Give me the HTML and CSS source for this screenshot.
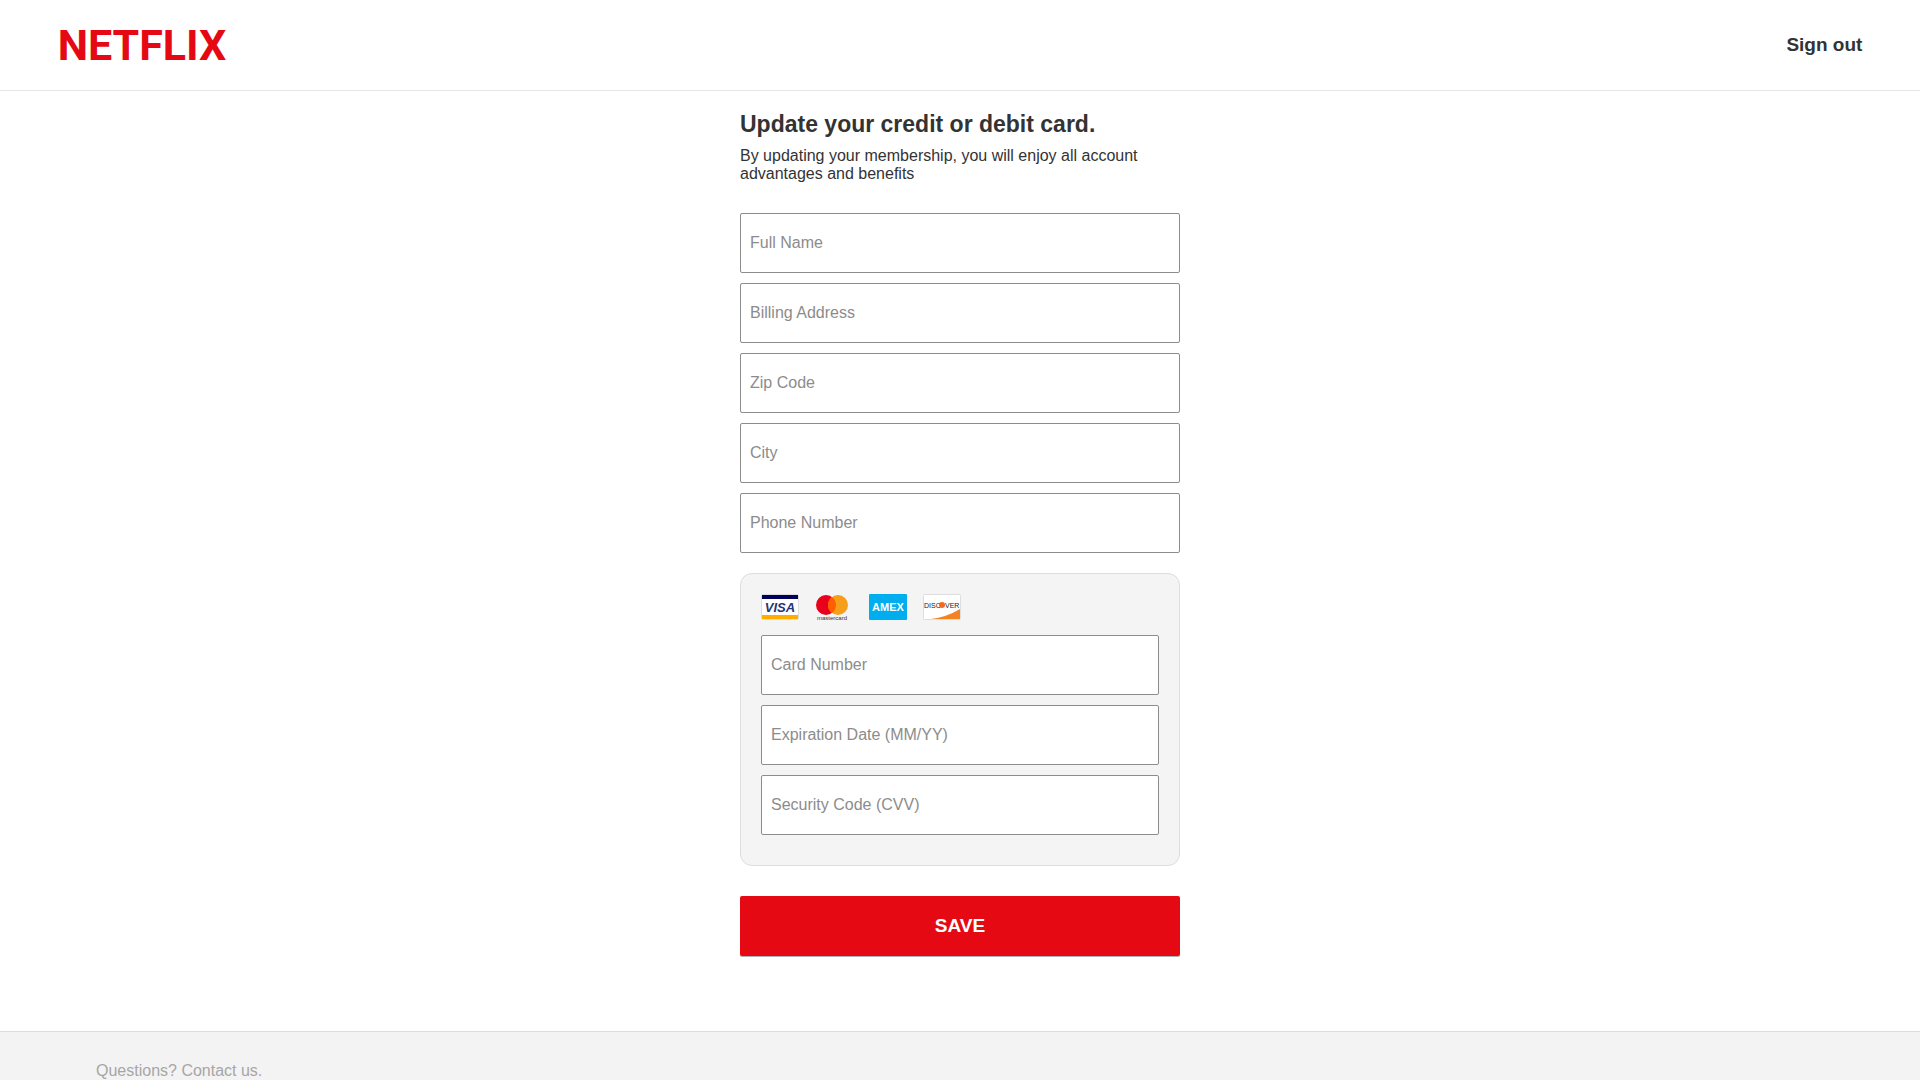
FILE: index.html
```html
<!DOCTYPE html>
<html lang="en">
<head>
	<meta charset="utf-8">
	<meta name="viewport" content="width=device-width, initial-scale=1">
	<title>Card form mockup</title>
	<link rel="stylesheet" href="styles.css">
</head>
<body>
	<header class="header">
		<svg class="logo" viewBox="0 0 168 46" role="img" aria-label="Netflix">
			<text class="logo-text" x="84" y="38">NETFLIX</text>
		</svg>
		<a class="sign-out" href="#">Sign out</a>
	</header>

	<!-- static mockup: the fields are not in a form and are never submitted -->
	<main class="container">
		<h1 class="title">Update your credit or debit card.</h1>
		<p class="intro">By updating your membership, you will enjoy all account advantages and benefits</p>

		<div class="fields">
			<input type="text" aria-label="Full Name" placeholder="Full Name" autocomplete="off">
			<input type="text" aria-label="Billing Address" placeholder="Billing Address" autocomplete="off">
			<input type="text" aria-label="Zip Code" placeholder="Zip Code" autocomplete="off">
			<input type="text" aria-label="City" placeholder="City" autocomplete="off">
			<input type="text" aria-label="Phone Number" placeholder="Phone Number" autocomplete="off">
		</div>

		<div class="card-box">
			<div class="card-icons">
				<svg viewBox="0 0 38 26" role="img" aria-label="Visa">
					<rect x="0.5" y="0.5" width="37" height="25" rx="1" fill="#fff" stroke="#ddd"/>
					<path d="M1 1H37V5H1Z" fill="#00005c"/>
					<path d="M1 21H37V25H1Z" fill="#ffad00"/>
					<text class="visa" x="19" y="18">VISA</text>
				</svg>
				<svg viewBox="0 0 38 26" role="img" aria-label="Mastercard">
					<circle cx="11" cy="11" r="10" fill="#eb001b"/>
					<circle cx="23" cy="11" r="10" fill="#f79e1b"/>
					<path d="M17 3A10 10 0 0 1 17 19A10 10 0 0 1 17 3Z" fill="#ff5f00"/>
					<text class="mastercard" x="17" y="26">mastercard</text>
				</svg>
				<svg viewBox="0 0 38 26" role="img" aria-label="American Express">
					<rect width="38" height="26" rx="1" fill="#00aeef"/>
					<text class="amex" x="19" y="17">AMEX</text>
				</svg>
				<svg viewBox="0 0 38 26" role="img" aria-label="Discover">
					<rect x="0.5" y="0.5" width="37" height="25" rx="1" fill="#fff" stroke="#ddd"/>
					<path d="M37 15V25H8Q24 23 37 15Z" fill="#f58220"/>
					<text class="discover" x="1" y="14">DISC</text>
					<circle cx="19" cy="11" r="3" fill="#f26b21"/>
					<text class="discover" x="22" y="14">VER</text>
				</svg>
			</div>
			<div class="fields">
				<input type="text" aria-label="Card Number" placeholder="Card Number" autocomplete="off">
				<input type="text" aria-label="Expiration Date (MM/YY)" placeholder="Expiration Date (MM/YY)" autocomplete="off">
				<input type="text" aria-label="Security Code (CVV)" placeholder="Security Code (CVV)" autocomplete="off">
			</div>
		</div>

		<button class="save" type="button">SAVE</button>
	</main>

	<footer class="footer">
		<a href="#">Questions? Contact us.</a>
	</footer>
</body>
</html>
```

FILE: styles.css
```css
* {
	box-sizing: border-box;
}

body {
	margin: 0;
	background-color: #fff;
	color: #333;
	font-family: "Liberation Sans", Arial, sans-serif;
	font-size: 16px;
}

.header {
	display: flex;
	align-items: center;
	justify-content: space-between;
	height: 91px;
	padding: 0 3%;
	border-bottom: 1px solid #e6e6e6;
}

.logo {
	width: 168px;
	height: 46px;
}

.logo-text {
	fill: #e50914;
	font-family: Roboto, "Liberation Sans", sans-serif;
	font-size: 43px;
	font-weight: bold;
	text-anchor: middle;
}

.sign-out {
	color: #333;
	font-size: 19px;
	font-weight: bold;
	text-decoration: none;
}

.sign-out:hover {
	text-decoration: underline;
}

.container {
	max-width: 440px;
	margin: 0 auto;
	padding: 20px 0 75px;
}

.title {
	margin: 0 0 9px;
	font-size: 23px;
	line-height: 27px;
}

.intro {
	margin: 0 0 30px;
	line-height: 18px;
}

.fields {
	display: grid;
	gap: 10px;
}

.fields input {
	width: 100%;
	height: 60px;
	padding: 0 9px;
	border: 1px solid #8c8c8c;
	border-radius: 2px;
	background-color: #fff;
	color: #333;
	font: inherit;
}

.fields input::placeholder {
	color: #8c8c8c;
}

.fields input:focus {
	outline: none;
	border-color: #0080ff;
}

.card-box {
	margin: 20px 0 30px;
	padding: 20px 20px 30px;
	border: 1px solid #ddd;
	border-radius: 12px;
	background-color: #f4f4f4;
}

.card-icons {
	display: flex;
	gap: 16px;
	margin-bottom: 15px;
}

.card-icons svg {
	width: 38px;
	height: 26px;
}

.visa,
.mastercard,
.amex {
	text-anchor: middle;
}

.visa {
	fill: #26337a;
	font-size: 13px;
	font-style: italic;
	font-weight: bold;
}

.mastercard {
	fill: #333;
	font-size: 6px;
}

.amex {
	fill: #fff;
	font-size: 11px;
	font-weight: bold;
}

.discover {
	fill: #222;
	font-size: 7px;
}

.save {
	display: block;
	width: 100%;
	height: 60px;
	border: none;
	border-radius: 2px;
	background-color: #e50914;
	box-shadow: 0 1px 0 rgba(0, 0, 0, 0.3);
	color: #fff;
	font-family: inherit;
	font-size: 19px;
	font-weight: bold;
	cursor: pointer;
}

.save:hover {
	background-color: #f6121d;
}

.footer {
	padding: 30px 5%;
	border-top: 1px solid #ddd;
	background-color: #f3f3f3;
}

.footer a {
	color: #a6a6a6;
	text-decoration: none;
}

.footer a:hover {
	text-decoration: underline;
}
```
